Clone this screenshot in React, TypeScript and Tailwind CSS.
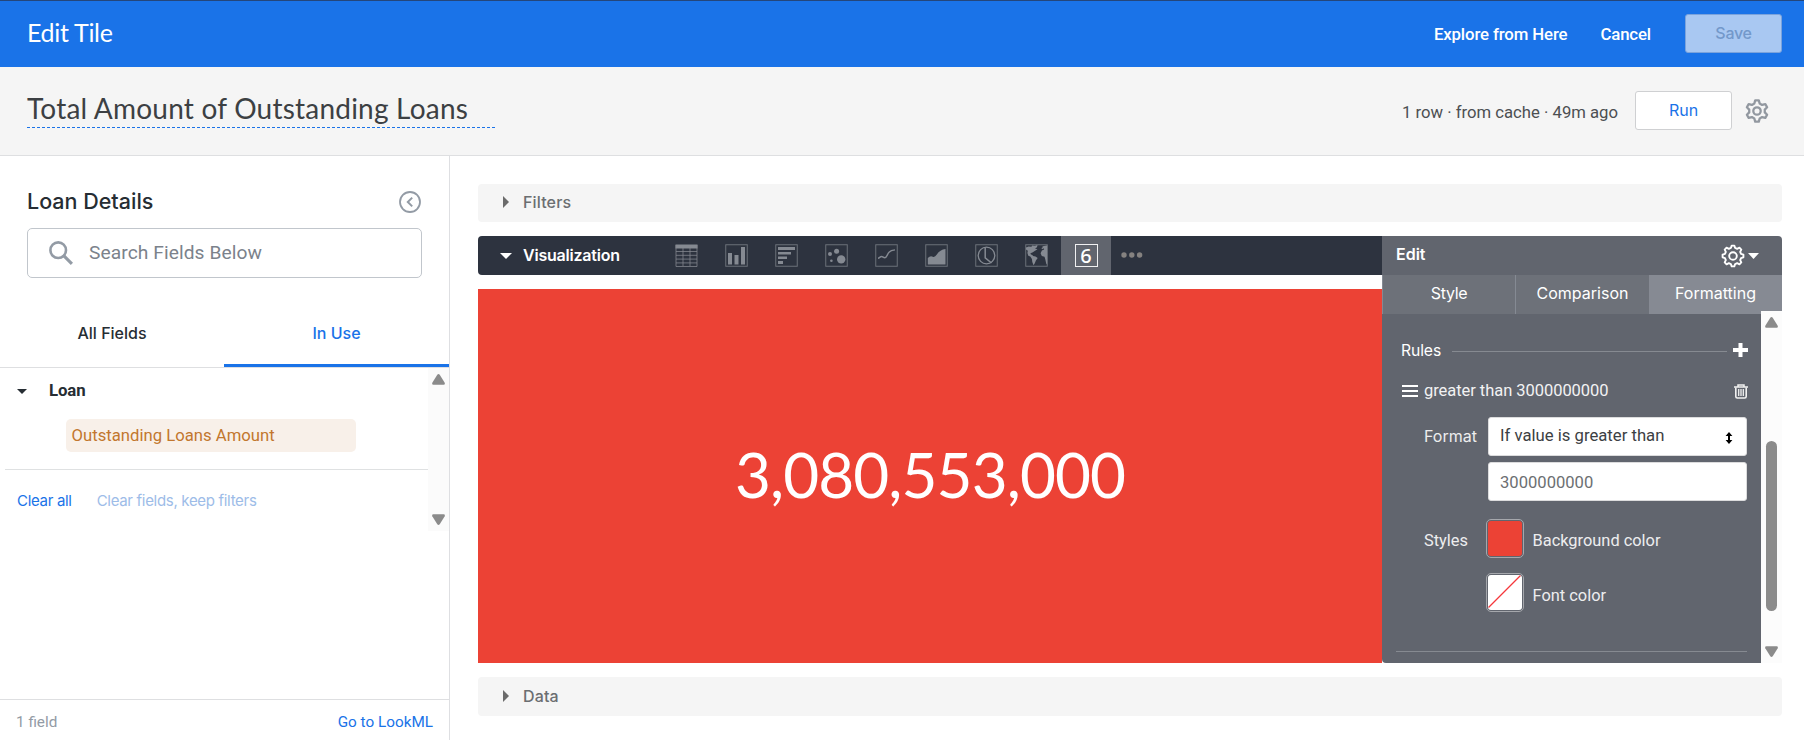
import React from "react";

type IconProps = { children: React.ReactNode };

const head = "font-['Lato','Open_Sans',sans-serif]";
const label = "font-['Inter',sans-serif]";

function Triangle({ dir, className }: { dir: "up" | "down"; className?: string }) {
  return (
    <svg width="13" height="11" viewBox="0 0 13 11" className={className}>
      <path
        d={
          dir === "up"
            ? "M5.3 .8Q6.5-.6 7.7.8L12.7 8.8Q13.3 10.6 11.7 10.8H1.3Q-.3 10.6.3 8.8Z"
            : "M5.3 10.2Q6.5 11.6 7.7 10.2L12.7 2.2Q13.3.4 11.7.2H1.3Q-.3.4.3 2.2Z"
        }
        fill="#8b8b8b"
      />
    </svg>
  );
}

function VizIcon({ children }: IconProps) {
  return (
    <div className="flex h-full w-[50px] shrink-0 items-center justify-center text-[#858a92]">
      <svg width="23" height="23" viewBox="0 0 23 23" fill="none" stroke="currentColor">
        {children}
      </svg>
    </div>
  );
}

function Frame() {
  return <rect x="0.75" y="0.75" width="21.5" height="21.5" strokeWidth="1" opacity="0.7" />;
}

function gearPath(cx: number, cy: number, teeth: number, outer: number, inner: number) {
  const pts: string[] = [];
  const step = (Math.PI * 2) / teeth;
  const profile: [number, number][] = [
    [-0.33, inner],
    [-0.16, outer],
    [0.16, outer],
    [0.33, inner],
  ];
  for (let i = 0; i < teeth; i++) {
    profile.forEach(([o, r]) => {
      const a = -Math.PI / 2 + (i + o) * step;
      pts.push(`${(cx + r * Math.cos(a)).toFixed(2)} ${(cy + r * Math.sin(a)).toFixed(2)}`);
    });
  }
  return `M${pts.join("L")}Z`;
}

function Header() {
  return (
    <header className="flex h-[67px] shrink-0 items-center border-t border-[#24467a] bg-[#1a73e8] pl-[27px] pr-[22px] text-white">
      <h1 className={`${head} mt-[-4px] text-[25px] leading-[30px] tracking-[-0.3px]`}>Edit Tile</h1>
      <div className="mb-[1px] ml-auto flex items-center text-[16.8px] font-medium leading-6 tracking-[-0.13px]">
        <span className="mr-[33px] mt-[1px]">Explore from Here</span>
        <span className="mr-[34px] mt-[1px]">Cancel</span>
        <button className={`${label} h-[39px] w-[97px] rounded-[3px] border border-[#7ba3dc] bg-[#a9c8f2] pb-[1px] text-[16px] font-medium tracking-[-0.3px] text-[#7398ca]`}>
          Save
        </button>
      </div>
    </header>
  );
}

function TitleBar() {
  return (
    <div className="flex h-[89px] shrink-0 items-center border-b border-[#dedfe1] bg-[#f5f5f5] pl-[27px] pr-[35px]">
      <div className="mt-[-3px] flex h-[36px] w-[470px] flex-col">
        <h2 className={`${head} mt-[-1px] whitespace-nowrap text-[28px] leading-[35px] tracking-[0.22px] text-[#3c4043]`}>
          Total Amount of Outstanding Loans
        </h2>
        <svg width="470" height="1" className="mt-px shrink-0">
          <line x1="0" y1="0.5" x2="470" y2="0.5" stroke="#1a73e8" strokeDasharray="3 2" />
        </svg>
      </div>
      <span className="ml-auto mt-[3px] text-[16.7px] text-[#4c4f52]">1 row · from cache · 49m ago</span>
      <button className={`${label} mb-[2px] ml-[17px] h-[39px] w-[97px] rounded-[3px] border border-[#cfd0d2] bg-white pb-[1px] text-[16px] text-[#1a73e8]`}>
        Run
      </button>
      <svg width="24" height="24" viewBox="0 0 24 24" className="ml-[13px]" fill="none" stroke="#9298a0" strokeWidth="2.3" strokeLinejoin="round">
        <path d={gearPath(12, 12, 6, 10.8, 7.9)} />
        <circle cx="12" cy="12" r="3.7" />
      </svg>
    </div>
  );
}

function Sidebar() {
  return (
    <aside className="flex w-[450px] shrink-0 flex-col border-r border-[#dedfe2] bg-white">
      <div className="flex h-[72px] shrink-0 items-end justify-between pl-[27px] pr-[28px]">
        <h3 className={`${label} mb-[13px] text-[21.5px] font-medium leading-[28px] text-[#262d33]`}>Loan Details</h3>
        <svg width="22" height="22" viewBox="0 0 22 22" className="mb-[15px]" fill="none" stroke="#939ba5" strokeWidth="1.8">
          <circle cx="11" cy="11" r="10" />
          <path d="M13.2 6.6L8.8 11l4.4 4.4" strokeWidth="2" />
        </svg>
      </div>
      <div className="ml-[27px] flex h-[50px] w-[395px] shrink-0 items-center rounded-[5px] border border-[#c1c6cc] pl-[21px]">
        <svg width="24" height="24" viewBox="0 0 24 24" fill="none" stroke="#939ba5" strokeWidth="2.6">
          <circle cx="9.2" cy="9.2" r="7.8" />
          <path d="M14.7 14.7l8.2 8.2" strokeWidth="3.1" />
        </svg>
        <span className="ml-[16px] mt-[-1px] text-[19.2px] leading-6 tracking-[0.08px] text-[#7b828b]">Search Fields Below</span>
      </div>
      <div className={`${label} mt-[21px] flex h-[69px] shrink-0 border-b border-[#dedfe1] text-[16px] font-medium`}>
        <div className="flex w-[224px] items-center justify-center text-[#262d33]">All Fields</div>
        <div className="flex flex-1 items-center justify-center border-b-[3px] border-t-[3px] border-b-[#1a73e8] border-t-transparent text-[#1a73e8]">
          In Use
        </div>
      </div>
      <div className="flex h-[163px] shrink-0">
        <div className="flex w-[428px] flex-col">
          <div className="flex h-[46px] items-center pl-[17px] text-[16.8px] font-bold text-[#262d33]">
            <svg width="10" height="5" viewBox="0 0 10 5">
              <path d="M0 0h10L5 5z" fill="#262d33" />
            </svg>
            <span className="ml-[22px] tracking-[-0.1px]">Loan</span>
          </div>
          <div className="ml-[66px] mt-[5px] flex h-[33px] w-[290px] shrink-0 items-center rounded-[5px] bg-[#f8f0e9] pl-[5.5px] text-[16.7px] text-[#c2772e]">
            Outstanding Loans Amount
          </div>
          <div className="ml-[5px] mt-[17px] h-px shrink-0 bg-[#dfe1e2]" />
          <div className={`${label} mt-[19px] flex items-center pl-[17px] text-[15px] leading-6 tracking-[-0.31px]`}>
            <span className="text-[#1a73e8]">Clear all</span>
            <span className="ml-[25px] text-[#9dbce8]">Clear fields, keep filters</span>
          </div>
        </div>
        <div className="flex w-[21px] flex-col items-center justify-between bg-[#fbfbfb] pb-[6px] pt-[6px]">
          <Triangle dir="up" />
          <Triangle dir="down" />
        </div>
      </div>
      <div className="mt-auto flex h-[41px] shrink-0 items-center justify-between border-t border-[#dedfe1] pl-[16px] pr-[16px] pt-[4px] text-[15.3px]">
        <span className="text-[#939ba5]">1 field</span>
        <span className="text-[#1a73e8]">Go to LookML</span>
      </div>
    </aside>
  );
}

function CollapsedSection({ title, className }: { title: string; className: string }) {
  return (
    <div className={`${label} ${className} flex shrink-0 items-center rounded-[4px] bg-[#f5f5f5] pl-[25px] text-[16px] font-medium text-[#6b6e71]`}>
      <svg width="6" height="12" viewBox="0 0 6 12">
        <path d="M0 0l6 6-6 6z" fill="#6b6b6b" />
      </svg>
      <span className="ml-[14px] tracking-[0.15px]">{title}</span>
    </div>
  );
}

function VizBar() {
  return (
    <div className="flex h-[39px] shrink-0 items-center rounded-l-[4px] bg-[#2d333f] pl-[22px]">
      <svg width="12" height="6" viewBox="0 0 12 6">
        <path d="M0 0h12L6 6z" fill="#fff" />
      </svg>
      <span className={`${label} ml-[11px] mt-[-1px] w-[138px] text-[16px] font-semibold tracking-[-0.22px] text-white`}>Visualization</span>
      <VizIcon>
        <path d="M.5 2.5h22" strokeWidth="4" />
        <g opacity=".75">
          <path d="M1 1v21.5h21V1M1 7.5h21M1 11.3h21M1 15.1h21M1 18.9h21M8 4v18M15 4v18" />
        </g>
      </VizIcon>
      <VizIcon>
        <Frame />
        <path d="M3 9h4v11.5H3zM9.5 11h4v9.5h-4zM16 3h4v17.5h-4z" fill="currentColor" stroke="none" />
      </VizIcon>
      <VizIcon>
        <Frame />
        <path d="M3 3h17v3H3zM3 8h13v2.5H3zM3 12.5h9V15H3zM3 17h5v3H3z" fill="currentColor" stroke="none" />
      </VizIcon>
      <VizIcon>
        <Frame />
        <g fill="currentColor" stroke="none">
          <circle cx="5" cy="10" r="2" />
          <circle cx="11.6" cy="7.2" r="2.5" />
          <circle cx="6.4" cy="16.8" r="1.3" />
          <circle cx="16.2" cy="15.4" r="4.2" />
        </g>
      </VizIcon>
      <VizIcon>
        <Frame />
        <path d="M3 14.2c1.500 0 2-1.700 3.500-1.700s1.800 1.300 3.200 1.300c2.200 0 2.300-3.300 4.300-5.500 1.300-1.500 3.500-2.200 6-2.400" strokeWidth="1.4" />
      </VizIcon>
      <VizIcon>
        <Frame />
        <path d="M2.8 20.5V14q2.500-2.500 5-1.200 2 .8 4-2.200Q15 5.500 20.500 5v15.500z" fill="currentColor" stroke="none" />
      </VizIcon>
      <VizIcon>
        <Frame />
        <circle cx="11.5" cy="11.5" r="8.3" strokeWidth="1.3" />
        <path d="M10.2 3.5v10.300l6.300 5.200" strokeWidth="1.5" />
      </VizIcon>
      <VizIcon>
        <Frame />
        <path
          d="M1 3.500l2.500-1 3 .2.500-1.200 3 .2 2.500-.7-.5 2.200-2 1.300 2.500.7-2.800 1.800-2.300 1.400-2 .8.500 1.400 1.500.4.600.9 2.500.5 2.200 1.700-1.800 2.500-1.100 2.600-1.300 2-1.200-3.200-.4-3.100-1.600-2.300-2-.9L2.400 9l.4-2.300L1 5.500zM17 2.500l3-.8 2.200-.2v19.300l-1-1.400-1-4.400-.7-2.300-2.700-.6-1.200-2.900 1.300-2.800 2.200-.9-.4-1.300-1.700 1-.5-1.200 1.600-1z"
          fill="currentColor"
          stroke="none"
        />
      </VizIcon>
      <div className="flex h-full w-[50px] shrink-0 items-center justify-center bg-[#61656e]">
        <span className="flex h-[23px] w-[23px] items-center justify-center border border-[#f0f0f1] font-['Noto_Sans',sans-serif] text-[20px] font-medium leading-[21px] text-white">
          6
        </span>
      </div>
      <svg width="22" height="6" viewBox="0 0 22 6" className="mb-[2px] ml-[10px]" fill="#858280">
        <circle cx="3" cy="3" r="2.700" />
        <circle cx="10.800" cy="3" r="2.700" />
        <circle cx="18.600" cy="3" r="2.700" />
      </svg>
    </div>
  );
}

function Swatch({ empty }: { empty?: boolean }) {
  return (
    <div className="h-[39px] w-[38px] shrink-0 rounded-[5px] border border-[#a5a7ac] p-[1px]">
      {empty ? (
        <svg width="34" height="35" viewBox="0 0 34 35" className="rounded-[3px] bg-white">
          <path d="M0.5 32.5L32.5 0.5" stroke="#f5383c" strokeWidth="1.3" />
        </svg>
      ) : (
        <div className="h-[35px] w-[34px] rounded-[3px] bg-[#ec4235]" />
      )}
    </div>
  );
}

function EditPanel() {
  return (
    <section className="flex w-[400px] shrink-0 flex-col overflow-hidden rounded-bl-[4px] rounded-tr-[4px] bg-[#61656e] text-white">
      <div className="flex h-[39px] shrink-0 items-center pl-[14px] pr-[23px]">
        <span className={`${label} mt-[-4px] text-[16px] font-semibold`}>Edit</span>
        <svg width="24" height="24" viewBox="0 0 24 24" className="ml-auto" fill="none" stroke="#fff" strokeWidth="1.9" strokeLinejoin="round">
          <path d={gearPath(12, 12, 8, 10.5, 8.3)} />
          <circle cx="12" cy="12" r="3.8" />
        </svg>
        <svg width="11" height="6" viewBox="0 0 11 6" className="ml-[3px] mt-[1px]">
          <path d="M0 0h11L5.5 6z" fill="#fff" />
        </svg>
      </div>
      <div className={`${label} flex h-[39px] shrink-0 text-[16px]`}>
        <div className="flex w-[133px] items-center justify-center border-l border-[#858a93] bg-[#6d7179] pb-[4px] tracking-[-0.3px]">Style</div>
        <div className="flex w-[134px] items-center justify-center border-l border-[#858a93] bg-[#6d7179] pb-[4px]">Comparison</div>
        <div className="flex w-[133px] items-center justify-center bg-[#868a93] pb-[4px]">Formatting</div>
      </div>
      <div className="flex min-h-0 flex-1">
        <div className="flex w-[379px] flex-col">
          <div className={`${label} ml-[19px] mr-[13px] mt-[24px] flex h-[24px] shrink-0 items-center text-[15.7px]`}>
            <span className="mt-[2px] tracking-[-0.1px]">Rules</span>
            <div className="ml-[11px] mt-[2px] h-px flex-1 bg-[#868a91]" />
            <svg width="15" height="14" viewBox="0 0 15 14" className="ml-[6px]">
              <path d="M7.5 0v14M0 7h15" stroke="#fff" strokeWidth="4" />
            </svg>
          </div>
          <div className="ml-[20px] mr-[13px] mt-[16px] flex h-[24px] shrink-0 items-center text-[16.5px] text-[#f2f2f3]">
            <svg width="16" height="14" viewBox="0 0 16 14" className="mt-[2px]">
              <path d="M0 2h16M0 7h16M0 12h16" stroke="#fff" strokeWidth="1.9" />
            </svg>
            <span className="ml-[6px] mt-[3px] tracking-[-0.05px]">greater than 3000000000</span>
            <svg width="14" height="15" viewBox="0 0 14 15" className="ml-auto mt-[3px]" fill="none" stroke="#f1f1f1">
              <path d="M0 3h14M4 2.500V1h6v1.500" strokeWidth="1.5" />
              <path d="M1.800 3.500v9q0 1.500 1.500 1.500h7.400q1.500 0 1.500-1.500v-9" strokeWidth="1.6" />
              <path d="M4.700 5v7M7 5v7M9.300 5v7" strokeWidth="1.3" />
            </svg>
          </div>
          <div className="ml-[42px] mr-[14px] mt-[15px] flex h-[39px] shrink-0 items-center">
            <span className={`${label} mt-[-2px] w-[64px] text-[16px] text-[#ededee]`}>Format</span>
            <div className="flex h-full flex-1 items-center justify-between rounded-[3px] border border-[#dcdcdd] bg-white pl-[11px] pr-[13px] text-[16.7px] text-[#3c4043]">
              <span className="mt-[-1px]">If value is greater than</span>
              <svg width="8" height="12" viewBox="0 0 8 12" className="mt-[2px]">
                <path d="M4 0l3.400 4H5v4h2.400L4 12 .6 8H3V4H.6z" fill="#000" />
              </svg>
            </div>
          </div>
          <div className="ml-[106px] mr-[14px] mt-[6px] flex h-[39px] shrink-0 items-center rounded-[3px] border border-[#dcdcdd] bg-white pl-[11px] pt-[3px] text-[16.6px] text-[#6c6f72]">
            3000000000
          </div>
          <div className="ml-[42px] mt-[18px] flex h-[39px] shrink-0 items-center text-[16.4px] text-[#ededee]">
            <span className="mt-[6px] w-[62px] shrink-0">Styles</span>
            <Swatch />
            <span className="ml-[8.5px] mt-[5px]">Background color</span>
          </div>
          <div className="ml-[104px] mt-[15px] flex h-[39px] shrink-0 items-center text-[16.4px] text-[#ededee]">
            <Swatch empty />
            <span className="ml-[8.5px] mt-[7px]">Font color</span>
          </div>
          <div className="ml-[14px] mr-[14px] mt-[39px] h-px shrink-0 bg-[#868a91]" />
        </div>
        <div className="mt-[-3px] flex w-[21px] shrink-0 flex-col items-center bg-[#fcfcfc] pb-[6px] pt-[6px]">
          <Triangle dir="up" className="shrink-0" />
          <div className="mt-[113px] h-[170px] w-[11px] shrink-0 rounded-full bg-[#8b8b8b]" />
          <Triangle dir="down" className="mt-auto shrink-0" />
        </div>
      </div>
    </section>
  );
}

export default function App() {
  return (
    <div className="flex h-[740px] w-[1804px] flex-col overflow-hidden bg-white font-['Roboto',sans-serif]">
      <Header />
      <TitleBar />
      <div className="flex min-h-0 flex-1">
        <Sidebar />
        <main className="flex flex-1 flex-col gap-[14px] pb-[24px] pl-[28px] pr-[22px] pt-[28px]">
          <CollapsedSection title="Filters" className="h-[38px] pb-[2px]" />
          <div className="flex h-[427px] shrink-0">
            <div className="flex flex-1 flex-col gap-[14px]">
              <VizBar />
              <div className="flex flex-1 items-center justify-center bg-[#ec4235] pb-[4px]">
                <span className={`${head} text-[62px] leading-[70px] tracking-[-0.9px] text-white`}>3,080,553,000</span>
              </div>
            </div>
            <EditPanel />
          </div>
          <CollapsedSection title="Data" className="h-[39px] pb-[1px]" />
        </main>
      </div>
    </div>
  );
}
